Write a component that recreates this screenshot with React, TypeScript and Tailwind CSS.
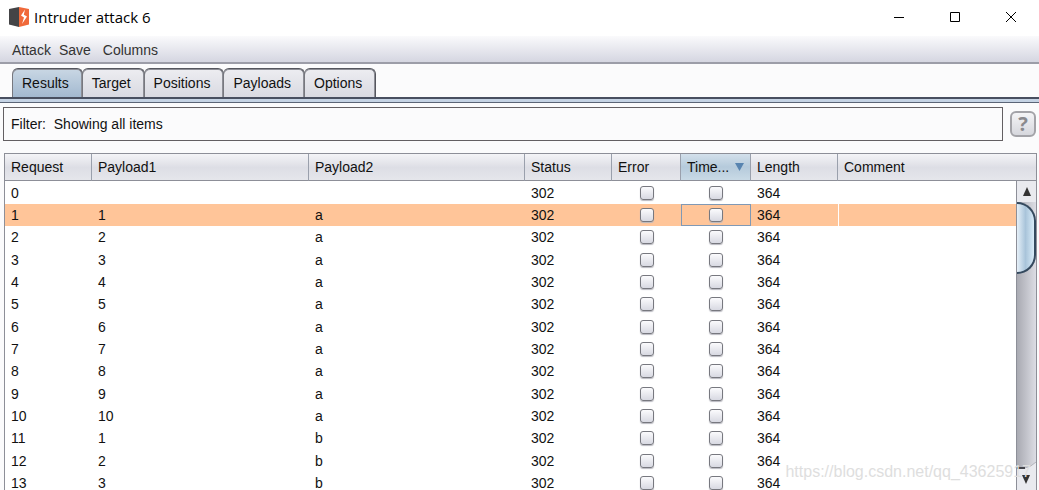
import React, { useState } from 'react';

const tabs = ['Results', 'Target', 'Positions', 'Payloads', 'Options'];

const rows = [
  { request: 0, payload1: '', payload2: '' },
  { request: 1, payload1: '1', payload2: 'a' },
  { request: 2, payload1: '2', payload2: 'a' },
  { request: 3, payload1: '3', payload2: 'a' },
  { request: 4, payload1: '4', payload2: 'a' },
  { request: 5, payload1: '5', payload2: 'a' },
  { request: 6, payload1: '6', payload2: 'a' },
  { request: 7, payload1: '7', payload2: 'a' },
  { request: 8, payload1: '8', payload2: 'a' },
  { request: 9, payload1: '9', payload2: 'a' },
  { request: 10, payload1: '10', payload2: 'a' },
  { request: 11, payload1: '1', payload2: 'b' },
  { request: 12, payload1: '2', payload2: 'b' },
  { request: 13, payload1: '3', payload2: 'b' },
];

const checkbox =
  'block mx-auto size-3.5 appearance-none rounded-[3px] border border-[#77787f] bg-linear-to-b from-[#fbfbfd] to-[#d8d9e2] shadow-[0_1px_1px_#b9b9c0] checked:bg-[#7f9db9]';

const td = 'py-0 pl-1.5';
const th = 'border-r border-[#9aa0ac] pl-1.5 text-left font-normal whitespace-nowrap';

function Logo() {
  return (
    <svg width="20" height="20" viewBox="0 0 20 20" aria-hidden="true">
      <path d="M0 2 L10 0 V20 L0 17.5 Z" fill="#444446" />
      <path d="M10 0 L20 2 V17.5 L10 20 Z" fill="#f0693a" />
      <path d="M16 2.5 L12 8.5 L15 10.5 L13 17 L18 9.5 L14.8 7.8 Z" fill="#fff" />
    </svg>
  );
}

export default function App() {
  const [tab, setTab] = useState('Results');
  const [selected, setSelected] = useState(1);

  return (
    <div className="relative flex h-screen flex-col overflow-hidden bg-[#fbfbfc] font-['Liberation_Sans',Arial,sans-serif] text-sm leading-4 text-[#111]">
      <header className="flex h-9 shrink-0 items-center bg-white pb-0.5 pl-[9px]">
        <Logo />
        <h1 className="ml-[5px] flex-1 font-['Open_Sans','Segoe_UI',sans-serif] text-[15px] text-black">Intruder attack 6</h1>
        <button type="button" aria-label="Minimize" className="flex h-full w-14 items-center justify-center">
          <svg width="10" height="10" viewBox="0 0 10 10" stroke="#000"><path d="M0 5.5 H10" /></svg>
        </button>
        <button type="button" aria-label="Maximize" className="flex h-full w-14 items-center justify-center">
          <svg width="10" height="10" viewBox="0 0 10 10" fill="none" stroke="#000"><path d="M.5 .5 H9.5 V9.5 H.5 Z" /></svg>
        </button>
        <button type="button" aria-label="Close" className="flex h-full w-14 items-center justify-center">
          <svg width="10" height="10" viewBox="0 0 10 10" stroke="#000"><path d="M0 0 L10 10 M10 0 L0 10" /></svg>
        </button>
      </header>

      <nav className="flex h-7 shrink-0 items-center gap-2 border-b-2 border-[#9c9da8] bg-linear-to-b from-[#fafafc] to-[#d5d6e1] pt-0.5 pl-3 text-[#333]">
        <button type="button">Attack</button>
        <button type="button">Save</button>
        <button type="button" className="ml-1">Columns</button>
      </nav>

      <div role="tablist" className="flex shrink-0 border-b-2 border-[#484f60] pt-1 pl-3">
        {tabs.map((t) => (
          <button
            key={t}
            type="button"
            role="tab"
            aria-selected={tab === t}
            onClick={() => setTab(t)}
            className={`h-[29px] rounded-t-md border border-b-0 border-[#55565e] border-l-[#77787f] pr-[13px] pl-[9px] not-first:-ml-px shadow-[inset_0_1px_0_#8d8e96,inset_-1px_0_0_#8d8e96] ${
              tab === t
                ? 'bg-linear-to-b from-[#c9d7e4] to-[#a3b9d0]'
                : 'bg-linear-to-b from-[#ededf1] to-[#d9dae2]'
            }`}
          >
            {t}
          </button>
        ))}
      </div>
      <div className="h-1 shrink-0 border-b border-[#5b6577] bg-[#c5d3e4]" />

      <div className="flex shrink-0 items-center gap-[7px] pt-1 pr-[3px] pb-3 pl-[3px]">
        <button type="button" className="h-[34px] flex-1 border border-[#635f62] pl-[7px] text-left">
          Filter:&nbsp; Showing all items
        </button>
        <button
          type="button"
          aria-label="Help"
          className="size-[26px] rounded-md border-2 border-[#a3a3a8] bg-linear-to-b from-[#f4f4f6] to-[#d6d7dd] font-['Noto_Sans',sans-serif] text-xl leading-5 font-bold text-[#8a8a8e]"
        >
          ?
        </button>
      </div>

      <main className="relative mr-0.5 ml-1 min-h-0 flex-1 overflow-hidden border-t border-l border-r border-[#8d8f98] bg-white">
        <table className="w-full table-fixed border-separate border-spacing-0">
          <colgroup>
            <col className="w-[87px]" />
            <col className="w-[217px]" />
            <col className="w-[216px]" />
            <col className="w-[87px]" />
            <col className="w-[69px]" />
            <col className="w-[70px]" />
            <col className="w-[87px]" />
            <col />
          </colgroup>
          <thead>
            <tr className="h-[27px] bg-linear-to-b from-[#f4f4f7] via-[#dddee5] to-[#e6e7ec] [&>th]:border-b [&>th]:border-b-[#8d8f98]">
              <th scope="col" className={th}>Request</th>
              <th scope="col" className={th}>Payload1</th>
              <th scope="col" className={th}>Payload2</th>
              <th scope="col" className={th}>Status</th>
              <th scope="col" className={th}>Error</th>
              <th scope="col" aria-sort="descending" className={`${th} bg-linear-to-b from-[#d3e0eb] via-[#b5cadb] to-[#c9dae6]`}>
                <span className="flex items-center justify-between pr-1.5">
                  Time...
                  <svg width="9" height="8" viewBox="0 0 9 8" fill="#5884b0" aria-hidden="true"><path d="M0 0 H9 L4.5 8 Z" /></svg>
                </span>
              </th>
              <th scope="col" className={th}>Length</th>
              <th scope="col" className="pl-1.5 text-left font-normal">Comment</th>
            </tr>
          </thead>
          <tbody className="leading-[14px]">
            {rows.map((r) => {
              const active = r.request === selected;
              return (
                <tr
                  key={r.request}
                  onClick={() => setSelected(r.request)}
                  className={`h-[22px] [&:nth-child(3n+1)]:h-[23px] ${active ? 'bg-[#ffc599]' : 'bg-white'}`}
                >
                  <td className={td}>{r.request}</td>
                  <td className={td}>{r.payload1}</td>
                  <td className={td}>{r.payload2}</td>
                  <td className={td}>302</td>
                  <td className="p-0">
                    <input type="checkbox" aria-label={`Error ${r.request}`} className={checkbox} />
                  </td>
                  <td className={`p-0 ${active ? 'outline outline-[#8099b5] -outline-offset-1' : ''}`}>
                    <input type="checkbox" aria-label={`Timeout ${r.request}`} className={checkbox} />
                  </td>
                  <td className={td}>364</td>
                  <td className="border-l border-white p-0"></td>
                </tr>
              );
            })}
          </tbody>
        </table>

        <div className="absolute top-[27px] right-0 bottom-0 flex w-5 flex-col border-l border-[#8d8f98] bg-linear-to-r from-[#a9aab2] to-[#dcdde4]">
          <button type="button" aria-label="Scroll up" className="flex h-[21px] items-center justify-center bg-[#e9eaef]">
            <svg width="8" height="9" viewBox="0 0 8 9" fill="#333"><path d="M4 0 L8 9 H0 Z" /></svg>
          </button>
          <div className="h-[72px] rounded-r-full border-2 border-l-0 border-[#34495e] bg-linear-to-r from-[#e6f0f8] via-[#a9c4da] to-[#d8ebf8]" />
          <div className="flex-1" />
          <button type="button" aria-label="Scroll down" className="h-7">
            <svg width="19" height="28" viewBox="0 0 19 28">
              <path d="M0 6 H8 Q14 5 19 0 V28 H0 Z" fill="#e9eaef" />
              <path d="M0 6 H8 M0 3 V6" stroke="#44454c" strokeWidth="2" fill="none" />
              <path d="M8 6 Q14 5 19 0" stroke="#b4b5bd" fill="none" />
              <path d="M5 13 H13 L9 22 Z" fill="#333" />
            </svg>
          </button>
        </div>
      </main>

      <span className="pointer-events-none absolute right-2 bottom-2 text-base leading-5 text-[#dedede]">https://blog.csdn.net/qq_43625917</span>
    </div>
  );
}
